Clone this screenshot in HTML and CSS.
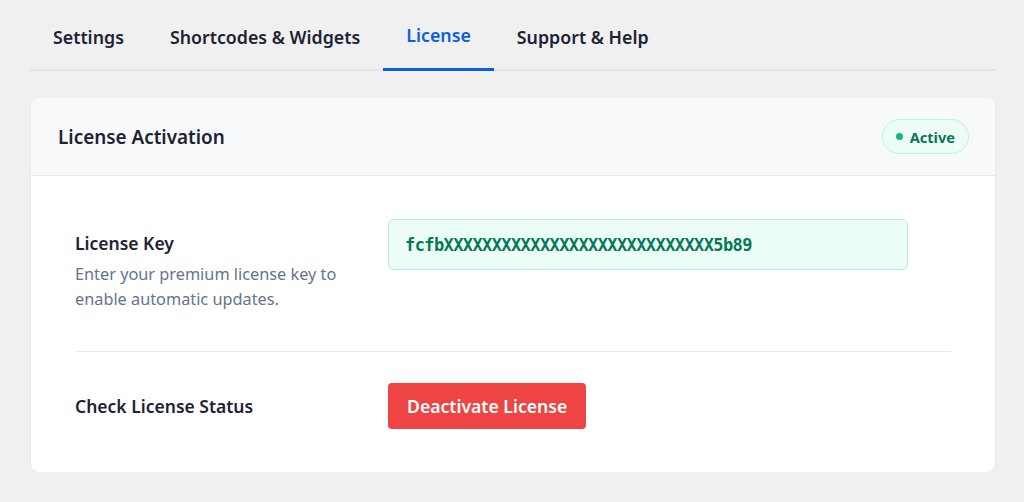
FILE: index.html
```html
<!DOCTYPE html>
<html lang="en">
<head>
    <meta charset="UTF-8">
    <meta name="viewport" content="width=device-width, initial-scale=1.0">
    <title>License - Plugin Settings</title>
    <link rel="stylesheet" href="styles.css">
</head>
<body>

    <div class="wrap">
        <!-- Tabs -->
        <nav class="tabs">
            <a href="#" class="tab">Settings</a>
            <a href="#" class="tab">Shortcodes &amp; Widgets</a>
            <a href="#" class="tab active">License</a>
            <a href="#" class="tab">Support &amp; Help</a>
        </nav>

        <!-- License card -->
        <div class="card">
            <div class="card-header">
                <h2>License Activation</h2>
                <span class="badge"><span class="dot"></span>Active</span>
            </div>

            <div class="card-body">
                <div class="field-row key-row">
                    <div class="field-label">
                        <h3>License Key</h3>
                        <p>Enter your premium license key to enable automatic updates.</p>
                    </div>
                    <div class="field-input">
                        <input type="text" class="key-input" value="fcfbXXXXXXXXXXXXXXXXXXXXXXXXXXXX5b89" readonly>
                    </div>
                </div>

                <div class="field-row status-row">
                    <div class="field-label">
                        <h3>Check License Status</h3>
                    </div>
                    <div class="field-input">
                        <button class="btn-deactivate">Deactivate License</button>
                    </div>
                </div>
            </div>
        </div>
    </div>

</body>
</html>
```

FILE: styles.css
```css
/* General */
html, body {
    margin: 0;
    padding: 0;
    background-color: #f0f0f1;
    font-family: 'Noto Sans', 'Open Sans', sans-serif;
    color: #1d2333;
}

.wrap {
    padding: 0 27px 0 30px;
}

/* Tabs */
.tabs {
    display: flex;
    border-bottom: 2px solid #e4e4e6;
}

.tab {
    display: block;
    padding: 25px 23px 19px;
    border-bottom: 3px solid transparent;
    margin-bottom: -2px;
    font-size: 17.8px;
    font-weight: 600;
    line-height: 24px;
    color: #1d2333;
    text-decoration: none;
}

.tab.active {
    color: #0b5fe0;
    border-bottom-color: #0b5fe0;
    padding-top: 23px;
    padding-bottom: 21px;
}

/* Card */
.card {
    margin: 27px 2px 0 1px;
    background-color: #fff;
    border-radius: 8px;
    box-shadow: 0 1px 3px rgba(0, 0, 0, 0.06);
    overflow: hidden;
}

.card-header {
    display: flex;
    justify-content: space-between;
    align-items: center;
    height: 77px;
    padding: 0 26px 0 27px;
    background-color: #f8f9fb;
    border-bottom: 1px solid #e6eaf0;
}

.card-header h2 {
    margin: 0;
    font-size: 18.9px;
    font-weight: 600;
}

.badge {
    display: flex;
    align-items: center;
    gap: 7px;
    height: 33px;
    padding: 0 13px;
    border: 1px solid #bcf5d6;
    border-radius: 18px;
    background-color: #ecfdf5;
    color: #08775a;
    font-size: 14.6px;
    font-weight: 700;
}

.badge .dot {
    width: 7px;
    height: 7px;
    border-radius: 50%;
    background-color: #10b981;
}

.card-body {
    padding: 43px 44px 43px;
}

/* Rows */
.field-row {
    display: grid;
    grid-template-columns: 280px 1fr;
    column-gap: 33px;
}

.key-row {
    align-items: start;
    padding-bottom: 39px;
    border-bottom: 1px solid #e8eaee;
}

.status-row {
    align-items: center;
    padding-top: 31px;
}

.field-label h3 {
    margin: 0;
    font-size: 17.5px;
    font-weight: 600;
    line-height: 24px;
}

.key-row .field-label {
    padding-top: 12px;
}

.field-label p {
    margin: 7px 0 0;
    font-size: 16.3px;
    line-height: 25px;
    color: #64748b;
}

.key-input {
    box-sizing: border-box;
    width: 520px;
    height: 51px;
    padding: 0 16px;
    border: 1px solid #b4f1d4;
    border-radius: 6px;
    background-color: #ecfdf5;
    color: #047857;
    font-family: 'DejaVu Sans Mono', monospace;
    font-size: 17px;
    font-weight: bold;
    letter-spacing: -0.6px;
    outline: none;
}

.btn-deactivate {
    height: 46px;
    padding: 0 19px;
    border: none;
    border-radius: 4px;
    background-color: #ef4444;
    color: #fff;
    font-family: inherit;
    font-size: 17.6px;
    font-weight: 600;
    cursor: pointer;
}
```
